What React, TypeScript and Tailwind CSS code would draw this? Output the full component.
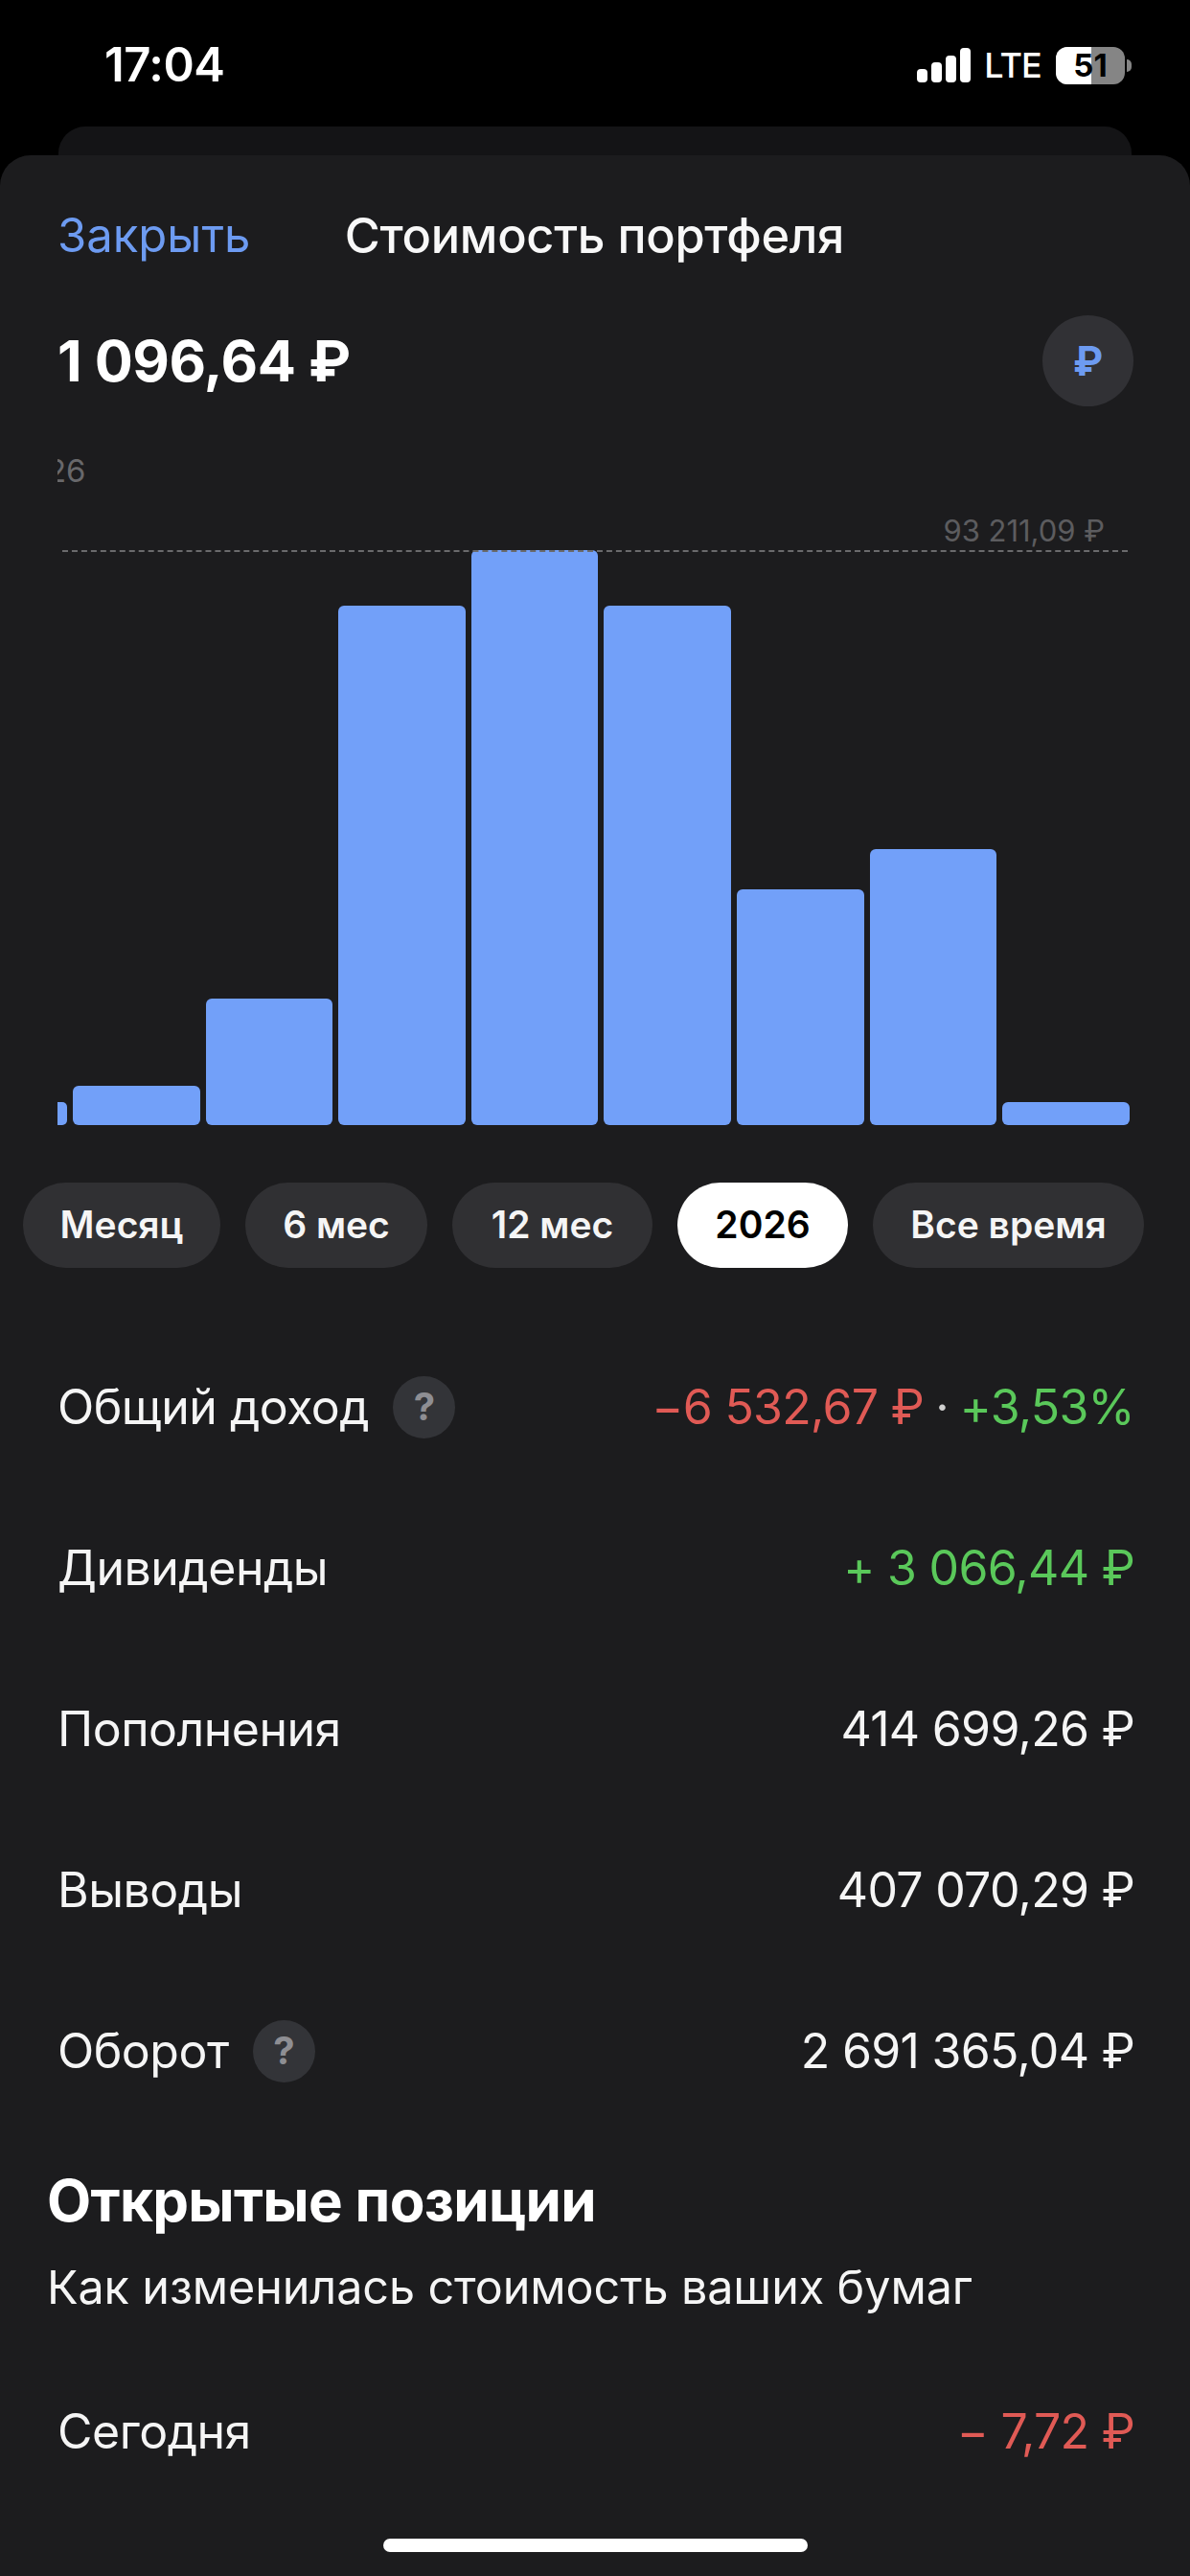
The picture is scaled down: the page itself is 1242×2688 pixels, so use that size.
const bars = [
  { h: 24, w: 'w-[10px]' },
  { h: 41, w: 'w-[132.6px]' },
  { h: 132, w: 'w-[132.6px]' },
  { h: 542, w: 'w-[132.6px]' },
  { h: 600, w: 'w-[132.6px]' },
  { h: 542, w: 'w-[132.6px]' },
  { h: 246, w: 'w-[132.6px]' },
  { h: 288, w: 'w-[132.6px]' },
  { h: 24, w: 'w-[132.6px]' },
];

const chips = [
  { t: 'Месяц', w: 'w-[206px]', a: false },
  { t: '6 мес', w: 'w-[190px]', a: false },
  { t: '12 мес', w: 'w-[209px]', a: false },
  { t: '2026', w: 'w-[178px]', a: true },
  { t: 'Все время', w: 'w-[283px]', a: false },
];

function Help() {
  return (
    <span className="ml-[25px] flex h-[65px] w-[65px] items-center justify-center rounded-full bg-[#333438] text-[40px] font-bold text-[#8e8e93]">?</span>
  );
}

function Row({ label, help, children }: { label: string; help?: boolean; children: React.ReactNode }) {
  return (
    <div className="flex h-[168px] items-center justify-between pl-[60px] pr-[58px] text-[50px] text-[#f5f5f5]">
      <div className="flex items-center tracking-[-0.5px]">
        <span>{label}</span>
        {help && <Help />}
      </div>
      <div className="flex items-center whitespace-nowrap tracking-[-0.7px]">{children}</div>
    </div>
  );
}

export default function App() {
  return (
    <div className="relative flex h-[2688px] w-[1242px] flex-col overflow-hidden bg-black font-['Inter','Liberation_Sans',sans-serif] text-white">
      {/* status bar */}
      <div className="flex h-[132px] shrink-0 items-start justify-between pl-[109px] pr-[61px] pt-[38px]">
        <span className="text-[49px] font-semibold leading-[60px] tracking-[-0.5px]">17:04</span>
        <div className="mt-[10px] flex items-center">
          <svg width="56" height="36" viewBox="0 0 56 36" fill="#fff">
            <rect x="0" y="22" width="11" height="14" rx="4" />
            <rect x="15" y="15" width="11" height="21" rx="4" />
            <rect x="30" y="8" width="11" height="28" rx="4" />
            <rect x="45" y="0" width="11" height="36" rx="4" />
          </svg>
          <span className="ml-[14px] text-[36px] font-medium leading-[40px] tracking-[-0.8px]">LTE</span>
          <div className="relative ml-[15px] flex h-[39px] w-[72px] items-center justify-center overflow-hidden rounded-[12px] bg-[#858585]">
            <div className="absolute inset-y-0 left-0 w-[37px] bg-white" />
            <span className="relative text-[33px] font-bold leading-none text-black">51</span>
          </div>
          <div className="ml-[2px] h-[13px] w-[5px] rounded-r-full bg-[#858585]" />
        </div>
      </div>

      {/* card behind */}
      <div className="mx-[61px] h-[30px] shrink-0 rounded-t-[28px] bg-[#141416]" />

      {/* sheet */}
      <div className="flex-1 overflow-hidden rounded-t-[32px] bg-[#1c1c1e]">
        <div className="mt-[49px] grid grid-cols-[1fr_auto_1fr] items-center pl-[60px] pr-[61px] leading-[70px]">
          <span className="text-[49px] text-[#6d9bf1]">Закрыть</span>
          <span className="text-[50.5px] font-medium tracking-[-0.3px] text-[#f8f8f8]">Стоимость портфеля</span>
          <span />
        </div>

        <div className="mt-[48px] flex items-center justify-between pl-[60px] pr-[59px]">
          <span className="text-[59.5px] font-bold tracking-[-0.5px]">1 096,64 ₽</span>
          <span className="flex h-[95px] w-[95px] items-center justify-center rounded-full bg-[#313135] text-[42px] font-bold text-[#6d9bf1]">₽</span>
        </div>

        {/* chart */}
        <div className="mx-[60px] mt-[40px] h-[110px] overflow-hidden">
          <div className="relative h-[70px]">
            <span className="absolute left-[-52px] top-[2px] text-[33px] leading-[50px] text-[#68686b]">2026</span>
          </div>
          <div className="flex justify-end pr-[29px]">
            <span className="text-[31px] leading-[40px] text-[#5c5c5f]">93 211,09 ₽</span>
          </div>
        </div>
        <div className="mx-[60px] h-[600px]">
          <div className="relative flex h-[600px] items-end gap-[6px]">
            <div className="absolute inset-x-[5px] top-0 border-t-2 border-dashed border-[#6a6a6c]" />
            {bars.map((b, i) => (
              <div
                key={i}
                className={`${b.w} ${i === 0 ? 'rounded-r-[5px]' : 'rounded-[6px]'} shrink-0 bg-[#72a0f9]`}
                style={{ height: b.h }}
              />
            ))}
          </div>
        </div>

        {/* chips */}
        <div className="mt-[60px] flex gap-[26px] pl-[24px]">
          {chips.map((c) => (
            <div
              key={c.t}
              className={`${c.w} ${c.a ? 'bg-white text-black' : 'bg-[#303033] text-[#f5f5f5]'} flex h-[89px] items-center justify-center rounded-full text-[39px] font-semibold`}
            >
              {c.t}
            </div>
          ))}
        </div>

        {/* rows */}
        <div className="mt-[61px]">
          <Row label="Общий доход" help>
            <span className="text-[#e05a55]">−6 532,67 ₽</span>
            <span className="mx-[12px] text-[#d0d0d0]">·</span>
            <span className="text-[#5ac85a]">+3,53%</span>
          </Row>
          <Row label="Дивиденды">
            <span className="text-[#5ac85a]">+ 3 066,44 ₽</span>
          </Row>
          <Row label="Пополнения">414 699,26 ₽</Row>
          <Row label="Выводы">407 070,29 ₽</Row>
          <Row label="Оборот" help>2 691 365,04 ₽</Row>
        </div>

        <div className="mt-[37px] px-[49px]">
          <h2 className="text-[60px] font-bold leading-[70px] tracking-[-0.7px]">Открытые позиции</h2>
          <p className="mt-[21px] text-[48.5px] leading-[70px] tracking-[-0.1px] text-[#f5f5f5]">Как изменилась стоимость ваших бумаг</p>
        </div>

        <div className="mt-[31px]">
          <Row label="Сегодня">
            <span className="text-[#e05a55]">− 7,72 ₽</span>
          </Row>
          <div className="pt-[5px]">
            <Row label="За неделю">
              <span className="text-[#e05a55]">− 7,72 ₽</span>
            </Row>
          </div>
        </div>
      </div>

      {/* home indicator */}
      <div className="absolute left-[400px] top-[2649px] h-[14px] w-[443px] rounded-full bg-white" />
    </div>
  );
}
